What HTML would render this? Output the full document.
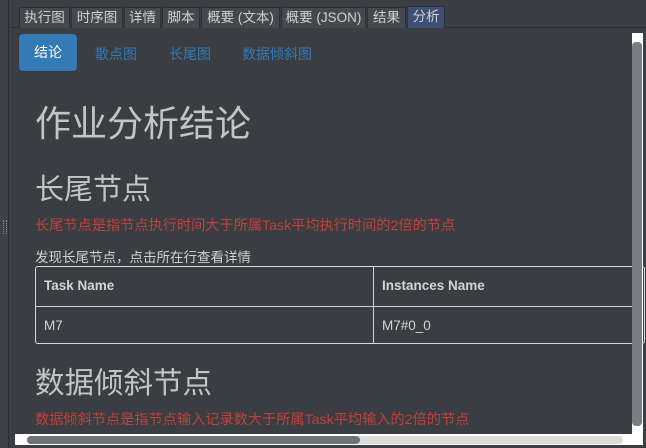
<!DOCTYPE html>
<html><head><meta charset="utf-8"><style>
*{margin:0;padding:0;box-sizing:border-box}
body{width:646px;height:448px;background:#3b3e42;position:relative;overflow:hidden;font-family:"Liberation Sans","Noto Sans CJK SC",sans-serif;color:#c8c8c8}
.abs{position:absolute}
.tab{position:absolute;top:7px;height:21px;background:#45484c;border:1px solid #2e3033;border-bottom:none;color:#d0d0d0;font-size:13.5px;line-height:20px;text-align:center}
.cn{font-family:"Noto Sans CJK SC",sans-serif}
</style></head><body>
<div class="abs" style="left:0;top:0;width:9px;height:448px;background:#3e4145;border-right:1px solid #2a2c2f"></div>
<div class="abs" style="left:3px;top:220px;width:4px;height:14px;border-left:1px dotted #888;border-right:1px dotted #888"></div>
<div class="abs" style="left:10px;top:27px;width:636px;height:1px;background:#2e3033"></div>
<div class="tab" style="left:19px;width:51px">执行图</div>
<div class="tab" style="left:71px;width:52px">时序图</div>
<div class="tab" style="left:124px;width:37px">详情</div>
<div class="tab" style="left:162px;width:38px">脚本</div>
<div class="tab" style="left:201px;width:79px">概要 (文本)</div>
<div class="tab" style="left:281px;width:85px">概要 (JSON)</div>
<div class="tab" style="left:367px;width:39px">结果</div>
<div class="tab" style="left:407px;width:38px;background:#3d5073;top:6px;height:22px">分析</div>
<div class="abs" style="left:15px;top:33px;width:628px;height:412px;background:#fff"></div>
<div class="abs" style="left:15px;top:33px;width:617px;height:401px;background:#3a3d41"></div>
<div class="abs" style="left:19px;top:34px;width:58px;height:37px;background:#337ab7;border-radius:4px;color:#fff;font-size:14px;line-height:37px;text-align:center">结论</div>
<div class="abs" style="left:95px;top:44px;font-size:14px;color:#337ab7">散点图</div>
<div class="abs" style="left:169px;top:44px;font-size:14px;color:#337ab7">长尾图</div>
<div class="abs" style="left:242px;top:44px;font-size:14px;color:#337ab7">数据倾斜图</div>
<div class="abs cn" style="left:35px;top:98px;font-size:36px;line-height:46px;color:#c4c4c4">作业分析结论</div>
<div class="abs cn" style="left:35px;top:168px;font-size:29px;line-height:38px;color:#c4c4c4">长尾节点</div>
<div class="abs" style="left:35px;top:215px;font-size:14.2px;color:#c0403c">长尾节点是指节点执行时间大于所属Task平均执行时间的2倍的节点</div>
<div class="abs" style="left:35px;top:246px;font-size:13.5px;color:#d0d0d0">发现长尾节点，点击所在行查看详情</div>
<div class="abs" style="left:35px;top:266px;width:610px;height:78px;border:1px solid #d8d8d8;border-radius:3px"></div>
<div class="abs" style="left:35px;top:306px;width:597px;height:1px;background:#d0d0d0"></div>
<div class="abs" style="left:373px;top:266px;width:1px;height:78px;background:#d0d0d0"></div>
<div class="abs" style="left:44px;top:278px;font-size:13.5px;font-weight:bold;color:#d4d4d4">Task Name</div>
<div class="abs" style="left:382px;top:278px;font-size:13.5px;font-weight:bold;color:#d4d4d4">Instances Name</div>
<div class="abs" style="left:44px;top:318px;font-size:13.5px;color:#d4d4d4">M7</div>
<div class="abs" style="left:382px;top:318px;font-size:13.5px;color:#d4d4d4">M7#0_0</div>
<div class="abs cn" style="left:35px;top:362px;font-size:29.5px;line-height:38px;color:#c4c4c4">数据倾斜节点</div>
<div class="abs" style="left:35px;top:409px;font-size:14.2px;color:#c0403c">数据倾斜节点是指节点输入记录数大于所属Task平均输入的2倍的节点</div>
<div class="abs" style="left:632px;top:42px;width:10px;height:384px;background:#7a7e82;border-radius:4px"></div>
<div class="abs" style="left:27px;top:436px;width:596px;height:8px;background:#dcdcdc;border-radius:4px"></div>
<div class="abs" style="left:27px;top:436px;width:333px;height:8px;background:#6e7276;border-radius:4px"></div>
</body></html>
